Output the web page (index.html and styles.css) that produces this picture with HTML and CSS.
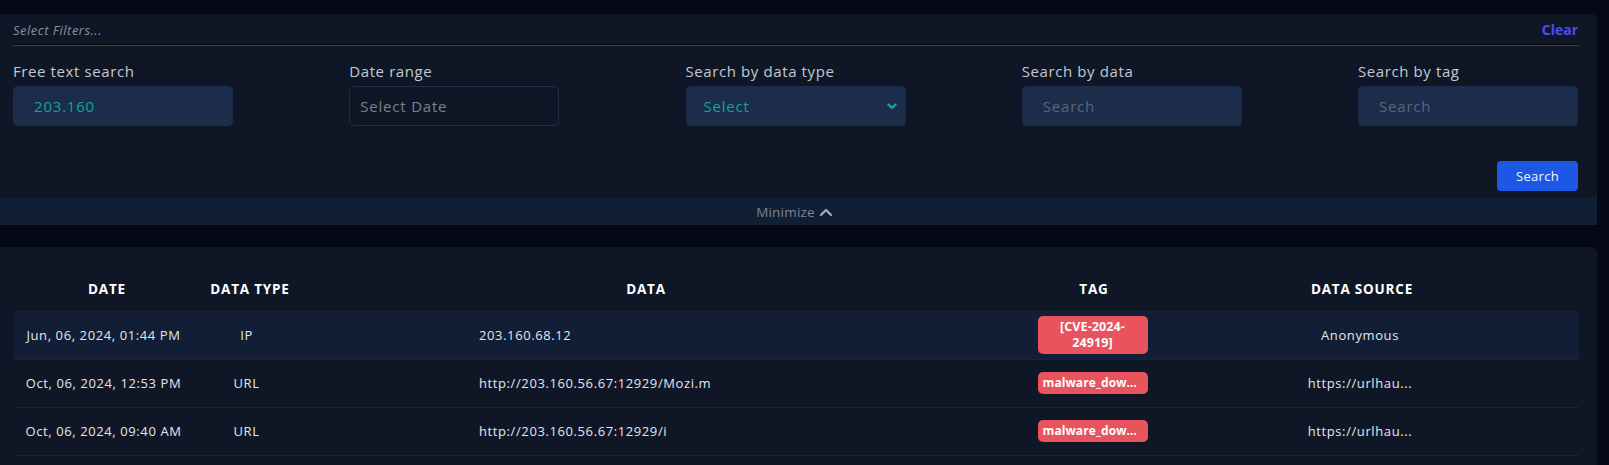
FILE: index.html
```html
<!DOCTYPE html>
<html lang="en">
<head>
<meta charset="utf-8">
<title>Search</title>
<link rel="stylesheet" href="styles.css">
</head>
<body>
<div class="page">
  <section class="filter-panel">
    <div class="filter-body">
      <div class="filter-head">
        <span class="filter-hint">Select Filters...</span>
        <a class="clear-link">Clear</a>
      </div>
      <div class="fields">
        <div class="field">
          <label class="field-label">Free text search</label>
          <input class="input input-filled" type="text" value="203.160">
        </div>
        <div class="field field-date">
          <label class="field-label">Date range</label>
          <input class="input input-date" type="text" placeholder="Select Date">
        </div>
        <div class="field">
          <label class="field-label">Search by data type</label>
          <div class="select-wrap">
            <select class="input input-select"><option>Select</option></select>
            <svg class="select-chevron" width="10" height="7" viewBox="0 0 10 7"><path d="M1.5 1.5 L5 5 L8.5 1.5" fill="none" stroke="#14a394" stroke-width="2.4" stroke-linecap="round" stroke-linejoin="round"/></svg>
          </div>
        </div>
        <div class="field">
          <label class="field-label">Search by data</label>
          <input class="input" type="text" placeholder="Search">
        </div>
        <div class="field">
          <label class="field-label">Search by tag</label>
          <input class="input" type="text" placeholder="Search">
        </div>
      </div>
      <div class="actions">
        <button class="btn-search">Search</button>
      </div>
    </div>
    <div class="minimize-bar">
      <span>Minimize</span>
      <svg width="14" height="10" viewBox="0 0 14 10"><path d="M2 8 L7 3 L12 8" fill="none" stroke="#a3a9b4" stroke-width="2.4" stroke-linecap="round" stroke-linejoin="round"/></svg>
    </div>
  </section>

  <section class="table-panel">
    <table class="results">
      <colgroup>
        <col class="c-date"><col class="c-type"><col class="c-data"><col class="c-tag"><col class="c-src">
      </colgroup>
      <thead>
        <tr>
          <th>DATE</th>
          <th>DATA TYPE</th>
          <th>DATA</th>
          <th>TAG</th>
          <th class="th-src">DATA SOURCE</th>
        </tr>
      </thead>
      <tbody>
        <tr class="row-active">
          <td class="td-date">Jun, 06, 2024, 01:44 PM</td>
          <td class="td-type">IP</td>
          <td class="td-data">203.160.68.12</td>
          <td class="td-tag"><span class="badge badge-wrap">[CVE-2024-24919]</span></td>
          <td class="td-src">Anonymous</td>
        </tr>
        <tr>
          <td class="td-date">Oct, 06, 2024, 12:53 PM</td>
          <td class="td-type">URL</td>
          <td class="td-data">http://203.160.56.67:12929/Mozi.m</td>
          <td class="td-tag"><span class="badge">malware_download</span></td>
          <td class="td-src">https://urlhau...</td>
        </tr>
        <tr>
          <td class="td-date">Oct, 06, 2024, 09:40 AM</td>
          <td class="td-type">URL</td>
          <td class="td-data">http://203.160.56.67:12929/i</td>
          <td class="td-tag"><span class="badge">malware_download</span></td>
          <td class="td-src">https://urlhau...</td>
        </tr>
      </tbody>
    </table>
  </section>
</div>
</body>
</html>
```
FILE: styles.css
```css
* { box-sizing: border-box; }

html, body {
  margin: 0;
  padding: 0;
  background: #050816;
  height: 100%;
  overflow: hidden;
}

body {
  font-family: "Open Sans", "Noto Sans", sans-serif;
  color: #e5e7eb;
}

.page {
  width: 1597px;
  padding-top: 14px;
}

/* ---------- filter panel ---------- */
.filter-panel {
  background: #0f1727;
  border-radius: 0 6px 0 0;
  overflow: hidden;
}

.filter-body {
  padding: 0 19px 7px 13px;
}

.filter-head {
  display: flex;
  align-items: center;
  justify-content: space-between;
  height: 31px;
  padding-top: 1px;
  border-bottom: 1px solid #000;
  box-shadow: 0 1px 0 #3d4454;
}

.filter-hint {
  font-size: 13px;
  font-style: italic;
  letter-spacing: 0.5px;
  color: #8a909b;
}

.clear-link {
  font-size: 14px;
  font-weight: 700;
  color: #4d4cf2;
  cursor: pointer;
}

.fields {
  display: flex;
  justify-content: space-between;
  margin-top: 16px;
}

.field {
  display: flex;
  flex-direction: column;
  width: 220px;
}

.field-label {
  font-size: 15px;
  line-height: 20px;
  color: #c3c8d1;
  letter-spacing: 0.6px;
  margin-bottom: 5px;
}

.input {
  width: 220px;
  height: 40px;
  border: 0;
  border-radius: 5px;
  background: #1b2d4a;
  padding: 0 21px;
  font-family: inherit;
  font-size: 15px;
  letter-spacing: 0.8px;
  color: #14a394;
  outline: none;
}

.input::placeholder { color: #5b6576; }

.input-date {
  width: 210px;
  background: transparent;
  border: 1px solid #1f2f4a;
  padding: 0 10px;
}

.input-date::placeholder { color: #7a808b; }

.select-wrap {
  position: relative;
  width: 220px;
}

.input-select {
  -webkit-appearance: none;
  appearance: none;
  padding: 0 18px;
  color: #14a394;
}

.select-chevron {
  position: absolute;
  right: 9px;
  top: 17px;
  pointer-events: none;
}

.actions {
  display: flex;
  justify-content: flex-end;
  margin-top: 35px;
}

.btn-search {
  width: 81px;
  height: 30px;
  border: 0;
  border-radius: 4px;
  background: #1d58e5;
  color: #f3f6ff;
  font-family: inherit;
  font-size: 13px;
  letter-spacing: 0.3px;
}

.minimize-bar {
  display: flex;
  align-items: center;
  justify-content: center;
  gap: 4px;
  height: 27px;
  background: #111f36;
  font-size: 13.5px;
  letter-spacing: 0.2px;
  color: #7d8492;
  padding-right: 8px;
}

/* ---------- table panel ---------- */
.table-panel {
  margin-top: 22px;
  background: #0f1727;
  border-radius: 0 6px 0 0;
  padding: 20px 18px 0 14px;
  height: 240px;
}

.results {
  width: 100%;
  border-collapse: collapse;
  table-layout: fixed;
}

.c-date { width: 186px; }
.c-type { width: 100px; }
.c-data { width: 692px; }
.c-tag  { width: 204px; }
.c-src  { width: auto; }

.results th {
  height: 44px;
  font-size: 13.5px;
  font-weight: 700;
  letter-spacing: 0.8px;
  color: #ffffff;
  text-align: center;
  vertical-align: middle;
  border-bottom: 1px solid #162036;
}

.results th.th-src { padding-right: 52px; }

.results td {
  height: 48px;
  font-size: 13px;
  color: #e3e6ec;
  text-align: center;
  vertical-align: middle;
  border-bottom: 1px solid #1a2438;
  letter-spacing: 0.6px;
}

.row-active td { background: #111e35; }

.results td.td-date { padding-right: 8px; }
.results td.td-type { padding-right: 8px; }
.results td.td-data { text-align: left; padding-left: 179px; }
.results td.td-tag { padding-right: 4px; }
.results td.td-src { padding-right: 56px; }

.badge {
  display: inline-block;
  width: 110px;
  padding: 3px 5px;
  border-radius: 5px;
  background: #e8535e;
  color: #fff;
  font-size: 12px;
  font-weight: 700;
  letter-spacing: 0.1px;
  line-height: 16px;
  white-space: nowrap;
  overflow: hidden;
  text-overflow: ellipsis;
  vertical-align: middle;
}

.badge-wrap {
  white-space: normal;
  padding: 3px 10px;
  font-size: 12.5px;
}
```
